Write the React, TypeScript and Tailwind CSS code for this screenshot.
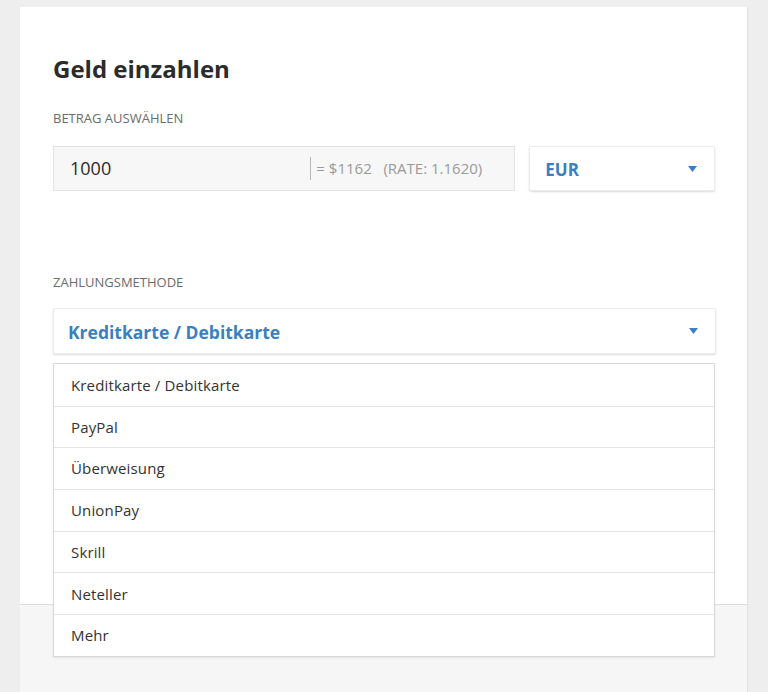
import React from "react";

const Caret = () => (
  <svg width="9" height="6" viewBox="0 0 9 6" className="shrink-0">
    <path d="M0 0 H9 L4.5 6 Z" fill="#3a7fc1" />
  </svg>
);

const options = [
  "Kreditkarte / Debitkarte",
  "PayPal",
  "Überweisung",
  "UnionPay",
  "Skrill",
  "Neteller",
  "Mehr",
];

export default function App() {
  return (
    <div
      className="w-[768px] h-[692px] overflow-hidden bg-[#eeeeee] pt-[7px] pl-[20px]"
      style={{ fontFamily: '"Open Sans", "Noto Sans", sans-serif' }}
    >
      <div className="w-[728px] h-[700px] bg-white border-r border-[#e2e2e2] flex flex-col">
        <div className="relative h-[597px] pl-[33px] pr-[32px] pt-[44px]">
          <h1 className="text-[24px] leading-[36px] font-bold text-[#2b2b2b]">Geld einzahlen</h1>
          <div className="mt-[23px] text-[13px] leading-[16px] text-[#6b6b6b] tracking-[0px]">BETRAG AUSWÄHLEN</div>
          <div className="mt-[20px] flex gap-[14px]">
            <div className="w-[463px] h-[45px] bg-[#f7f7f7] border border-[#e3e3e3] flex items-center pl-[16px] pr-[32px]">
              <span className="flex-1 text-[18px] text-[#2b2b2b]">1000</span>
              <span className="w-px h-[23px] bg-[#b8b8b8] mr-[5px]" />
              <span className="text-[15px] text-[#9a9a9a] tracking-[0px] whitespace-pre">= $1162   (RATE: 1.1620)</span>
            </div>
            <div className="w-[186px] h-[45px] bg-white border border-[#ececec] shadow-[0_1px_2px_rgba(0,0,0,0.15)] rounded-[2px] flex items-center pl-[15px] pr-[17px]">
              <span className="flex-1 text-[17px] font-bold text-[#3a7fc1] pt-[2px]">EUR</span>
              <Caret />
            </div>
          </div>
          <div className="mt-[83px] text-[13px] leading-[16px] text-[#6b6b6b] tracking-[0px]">ZAHLUNGSMETHODE</div>
          <div className="relative mt-[18px]">
            <div className="w-[663px] h-[46px] bg-white border border-[#ececec] shadow-[0_1px_2px_rgba(0,0,0,0.15)] rounded-[2px] flex items-center pl-[14px] pr-[17px]">
              <span className="flex-1 text-[17.5px] font-bold text-[#3a7fc1] pt-[2px]">Kreditkarte / Debitkarte</span>
              <Caret />
            </div>
            <div className="absolute left-0 top-[55px] w-[662px] bg-white border border-[#d9d9d9] shadow-[0_1px_2px_rgba(0,0,0,0.08)] z-10">
              {options.map((o, i) => (
                <div
                  key={o}
                  className={`h-[41.7px] flex items-center pl-[17px] text-[15px] tracking-[0.15px] text-[#333333] ${i > 0 ? "border-t border-[#e4e4e4]" : ""}`}
                >
                  {o}
                </div>
              ))}
            </div>
          </div>
        </div>
        <div className="flex-1 bg-[#f6f6f6] border-t border-[#dddddd]" />
      </div>
    </div>
  );
}
